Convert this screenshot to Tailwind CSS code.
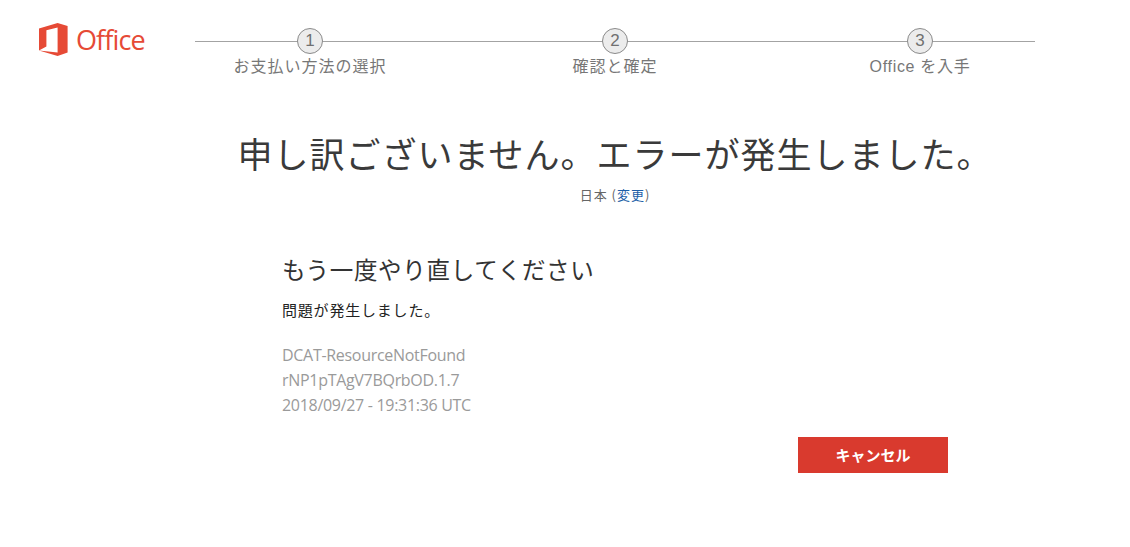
<!DOCTYPE html>
<html lang="ja">
<head>
    <meta charset="UTF-8">
    <title>Office</title>
    <script src="https://cdn.jsdelivr.net/npm/@tailwindcss/browser@4"></script>
</head>
<body class="bg-white font-['Noto_Sans_CJK_JP',sans-serif] w-[1130px] h-[547px] overflow-hidden">
    <!-- header: logo + stepper -->
    <header class="flex items-start pl-[39px] pt-[23px] h-[93px]">
        <div class="flex items-center w-[118.5px] h-[33px]">
            <svg width="29" height="33" viewBox="0 0 29 33" class="shrink-0">
                <path fill="#e64a36" d="M0 5.6 18.6 0 28.6 3v26.6L18.6 33 0 27.4zM18.6 4.6 7.4 7.2v16.3l-7.4 3.9 18.6 2.2z"/>
            </svg>
            <span class="ml-[8px] text-[27px] leading-[33px] tracking-[-0.9px] text-[#e64a36] font-['Open_Sans',sans-serif]">Office</span>
        </div>
        <div class="relative w-[915px] grid grid-cols-3 -mt-[1px]">
            <div class="absolute left-[37.5px] top-[18.5px] w-[840px] h-px bg-[#a3a3a3]"></div>
            <div class="relative flex flex-col items-center">
                <div class="w-[26px] h-[26px] mt-[6px] rounded-full border border-[#8a8a8a] bg-[#ececec] flex items-center justify-center text-[17px] text-[#707070] font-['Liberation_Sans',sans-serif]">1</div>
                <div class="-mt-[1px] text-[16px] tracking-[1px] leading-[24px] text-[#777]">お支払い方法の選択</div>
            </div>
            <div class="relative flex flex-col items-center">
                <div class="w-[26px] h-[26px] mt-[6px] rounded-full border border-[#8a8a8a] bg-[#ececec] flex items-center justify-center text-[17px] text-[#707070] font-['Liberation_Sans',sans-serif]">2</div>
                <div class="-mt-[1px] text-[16px] tracking-[1px] leading-[24px] text-[#777]">確認と確定</div>
            </div>
            <div class="relative flex flex-col items-center">
                <div class="w-[26px] h-[26px] mt-[6px] rounded-full border border-[#8a8a8a] bg-[#ececec] flex items-center justify-center text-[17px] text-[#707070] font-['Liberation_Sans',sans-serif]">3</div>
                <div class="mt-[1px] text-[16px] tracking-[0.7px] leading-[24px] text-[#777] font-['Liberation_Sans','Noto_Sans_CJK_JP',sans-serif]">Office を入手</div>
            </div>
        </div>
    </header>

    <main class="pl-[100px]">
        <h1 class="mt-[34px] text-center text-[35px] tracking-[1px] leading-[52px] font-normal text-[#3a3a3a]">申し訳ございません。エラーが発生しました。</h1>
        <p class="mt-[6px] text-center text-[13px] leading-[20px] tracking-[1px] text-[#666]">日本 (<a class="text-[#1e5fa8]">変更</a>)</p>
    </main>

    <section class="ml-[282px] mt-[46px] w-[666px]">
        <h2 class="text-[23.5px] tracking-[0.7px] leading-[36px] font-normal text-[#333]">もう一度やり直してください</h2>
        <p class="mt-[11px] text-[15px] tracking-[0.8px] leading-[24px] text-[#222]">問題が発生しました。</p>
        <div class="mt-[21px] text-[16px] tracking-[-0.3px] leading-[25px] text-[#9a9a9a] font-['Open_Sans',sans-serif]">
            <div>DCAT-ResourceNotFound</div>
            <div>rNP1pTAgV7BQrbOD.1.7</div>
            <div>2018/09/27 - 19:31:36 UTC</div>
        </div>
        <div class="flex justify-end mt-[19px]">
            <button class="w-[150px] h-[36px] bg-[#d93a2e] text-white text-[15px] font-bold">キャンセル</button>
        </div>
    </section>
</body>
</html>
